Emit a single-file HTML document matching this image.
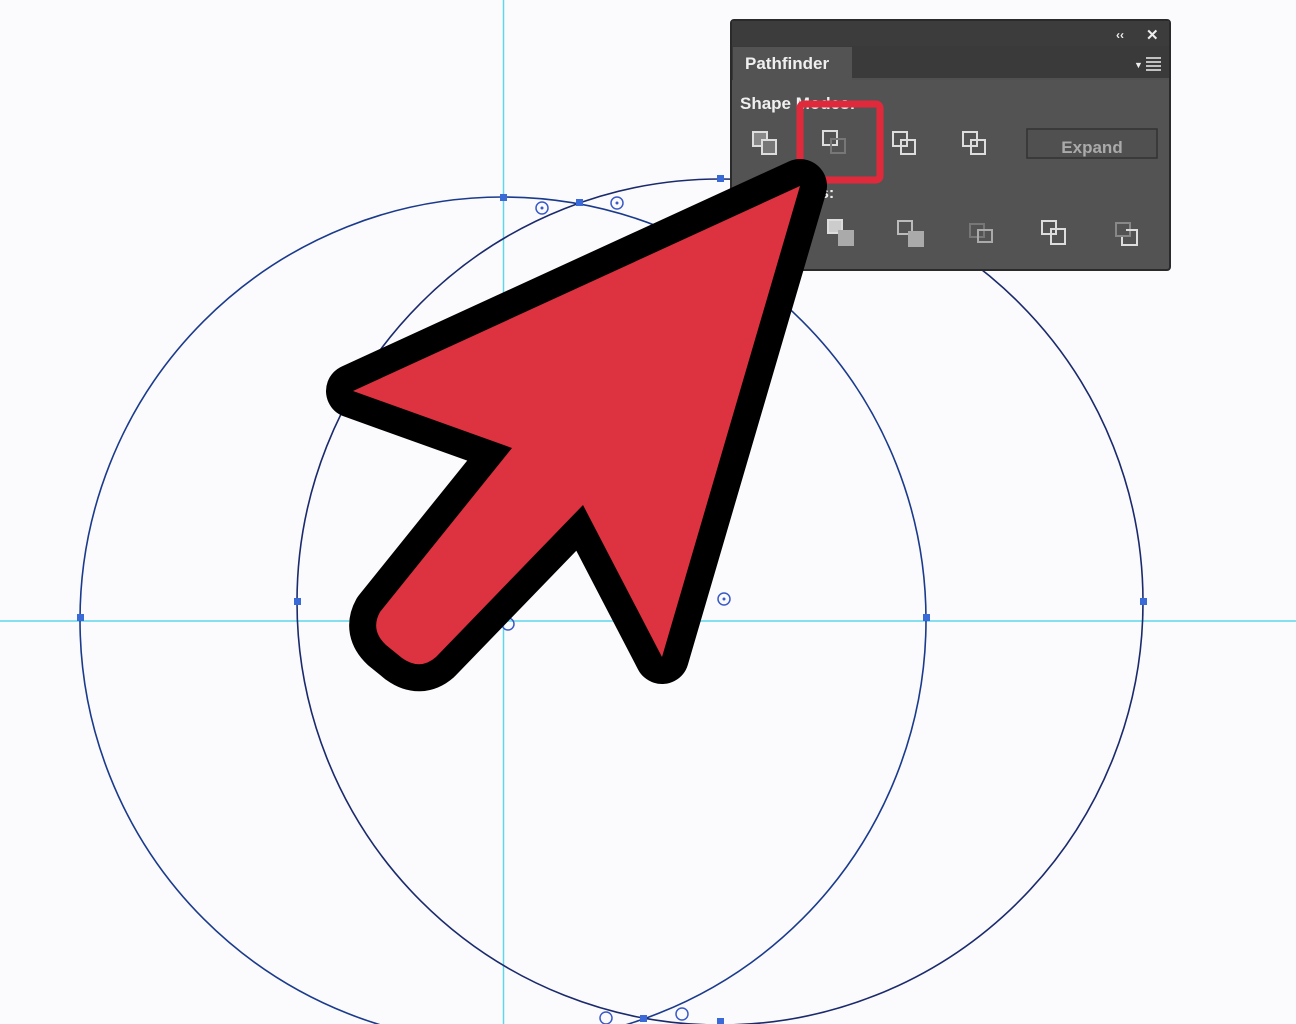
<!DOCTYPE html>
<html><head><meta charset="utf-8"><style>
html,body{margin:0;padding:0;background:#fbfbfd;}
svg{display:block}
text{font-family:"Liberation Sans",sans-serif;font-weight:bold}
</style></head><body>
<svg width="1296" height="1024" viewBox="0 0 1296 1024" xmlns="http://www.w3.org/2000/svg">
<rect width="1296" height="1024" fill="#fbfbfd"/>
<line x1="503.5" y1="0" x2="503.5" y2="1024" stroke="#5fd6ea" stroke-width="1.5"/>
<line x1="0" y1="621" x2="1296" y2="621" stroke="#5fd6ea" stroke-width="1.5"/>
<circle cx="503" cy="620" r="423" fill="none" stroke="#1a3a8c" stroke-width="1.6"/>
<circle cx="720" cy="602" r="423" fill="none" stroke="#1a2a6c" stroke-width="1.6"/>
<g fill="#3a6ad8">
<rect x="77" y="614" width="7" height="7"/><rect x="923" y="614" width="7" height="7"/>
<rect x="500" y="194" width="7" height="7"/><rect x="294" y="598" width="7" height="7"/>
<rect x="1140" y="598" width="7" height="7"/><rect x="717" y="175" width="7" height="7"/>
<rect x="576" y="199" width="7" height="7"/><rect x="640" y="1015" width="7" height="7"/>
<rect x="717" y="1018" width="7" height="7"/>
</g>
<g fill="none" stroke="#3a5ac8" stroke-width="1.5">
<circle cx="542" cy="208" r="6"/><circle cx="617" cy="203" r="6"/>
<circle cx="724" cy="599" r="6"/><circle cx="508" cy="624" r="6"/>
<circle cx="606" cy="1018" r="6"/><circle cx="682" cy="1014" r="6"/>
</g>
<g fill="#3a5ac8"><circle cx="542" cy="208" r="1.5"/><circle cx="617" cy="203" r="1.5"/><circle cx="724" cy="599" r="1.5"/></g>
<rect x="731" y="20" width="439" height="250" rx="3" fill="#535353" stroke="#2a2a2a" stroke-width="2"/>
<rect x="732" y="21" width="437" height="25" fill="#3c3c3c"/>
<rect x="732" y="46" width="437" height="34" fill="#3a3a3a"/>
<rect x="733" y="47" width="119" height="34" fill="#535353"/>
<line x1="852" y1="79" x2="1169" y2="79" stroke="#666" stroke-width="1"/>
<text x="745" y="69" font-size="17" fill="#f0f0f0">Pathfinder</text>
<text x="1116" y="39" font-size="12" fill="#eee">&#x2039;&#x2039;</text>
<text x="1146" y="40" font-size="15" fill="#eee">✕</text>
<text x="1134" y="68" font-size="9" fill="#eee">▼</text>
<g stroke="#eee" stroke-width="1.5"><line x1="1146" y1="58" x2="1161" y2="58"/><line x1="1146" y1="62" x2="1161" y2="62"/><line x1="1146" y1="66" x2="1161" y2="66"/><line x1="1146" y1="70" x2="1161" y2="70"/></g>
<text x="740" y="109" font-size="17" fill="#f0f0f0">Shape Modes:</text>
<text x="820" y="198" font-size="16" fill="#f0f0f0">s:</text>
<g fill="none" stroke="#ddd" stroke-width="2">
<rect x="753" y="132" width="14" height="14" fill="#888"/><rect x="762" y="140" width="14" height="14" fill="#777"/>
<rect x="823" y="131" width="14" height="14"/><rect x="831" y="139" width="14" height="14" stroke="#777"/>
<rect x="893" y="132" width="14" height="14"/><rect x="901" y="140" width="14" height="14"/>
<rect x="963" y="132" width="14" height="14"/><rect x="971" y="140" width="14" height="14"/>
<rect x="828" y="220" width="14" height="13" fill="#ccc"/><rect x="838" y="230" width="16" height="16" fill="#aaa" stroke="none"/>
<rect x="898" y="221" width="14" height="13" stroke="#bbb"/><rect x="908" y="231" width="16" height="16" fill="#aaa" stroke="none"/>
<rect x="970" y="224" width="14" height="13" stroke="#777"/><rect x="978" y="230" width="14" height="12" stroke="#aaa"/>
<rect x="1042" y="221" width="14" height="13"/><rect x="1051" y="229" width="14" height="15"/>
<rect x="1116" y="223" width="14" height="13" stroke="#888"/><path d="M1126 230 h11 v15 h-15 v-8" />
</g>
<rect x="1027" y="129" width="130" height="29" fill="#505050" stroke="#333" stroke-width="1.5"/>
<text x="1092" y="153" font-size="17" fill="#aaa" font-weight="normal" text-anchor="middle">Expand</text>
<rect x="800" y="104" width="80" height="76" rx="4" fill="none" stroke="#e02a3c" stroke-width="7"/>
<path d="M800 186 L353 391 L512 448 L380 612 Q370 630 386 645 L402 658 Q420 671 436 657 L583 505 L662 657 Z" fill="#000" stroke="#000" stroke-width="54" stroke-linejoin="round"/>
<path d="M800 186 L353 391 L512 448 L380 612 Q370 630 386 645 L402 658 Q420 671 436 657 L583 505 L662 657 Z" fill="#dd3240"/>
</svg>
</body></html>
